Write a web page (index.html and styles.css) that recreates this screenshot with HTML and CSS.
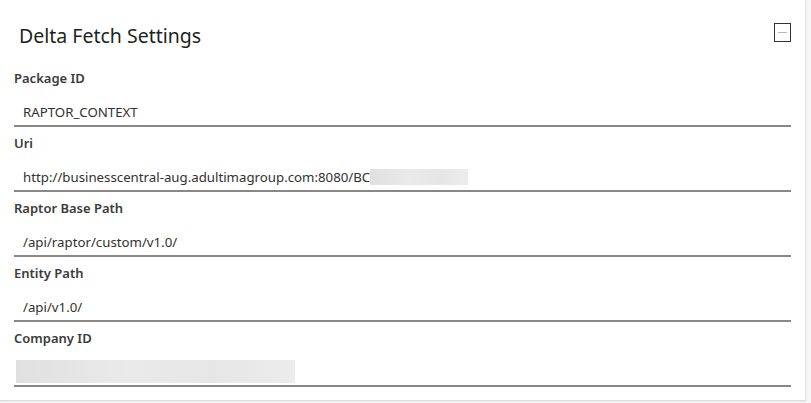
FILE: index.html
```html
<!DOCTYPE html>
<html lang="en">
<head>
<meta charset="utf-8">
<title>Delta Fetch Settings</title>
<link rel="stylesheet" href="styles.css">
</head>
<body>
<section class="card">
  <header class="card-header">
    <h2 class="card-title">Delta Fetch Settings</h2>
    <button class="collapse-btn" type="button" aria-label="Collapse"><span class="dash"></span></button>
  </header>
  <div class="field">
    <div class="field-label">Package ID</div>
    <div class="field-input"><span class="value">RAPTOR_CONTEXT</span></div>
  </div>
  <div class="field">
    <div class="field-label">Uri</div>
    <div class="field-input"><span class="value">http://businesscentral-aug.adultimagroup.com:8080/BC</span><span class="redact redact-uri"></span></div>
  </div>
  <div class="field">
    <div class="field-label">Raptor Base Path</div>
    <div class="field-input"><span class="value">/api/raptor/custom/v1.0/</span></div>
  </div>
  <div class="field">
    <div class="field-label">Entity Path</div>
    <div class="field-input"><span class="value">/api/v1.0/</span></div>
  </div>
  <div class="field">
    <div class="field-label">Company ID</div>
    <div class="field-input field-input-redacted"><span class="redact redact-company"></span></div>
  </div>
</section>
</body>
</html>
```

FILE: styles.css
```css
html, body {
  margin: 0;
  padding: 0;
}
body {
  background: #f7f7f7;
  font-family: "Noto Sans", "Open Sans", sans-serif;
  color: #323130;
  width: 811px;
  height: 403px;
  overflow: hidden;
}
.card {
  width: 806px;
  height: 401px;
  box-sizing: border-box;
  background: #ffffff;
  border-right: 1px solid #e4e4e4;
  border-bottom: 1px solid #dcdcdc;
  box-shadow: 0 1px 2px rgba(0,0,0,0.06);
  padding: 0 14px 0 14px;
}
.card-header {
  height: 62px;
  display: flex;
  align-items: flex-start;
  justify-content: space-between;
  padding-left: 5px;
  box-sizing: border-box;
}
.card-title {
  margin: 24px 0 0 0;
  font-size: 19.5px;
  line-height: 24px;
  font-weight: 400;
  color: #201f1e;
}
.collapse-btn {
  margin: 23px 0 0 0;
  width: 17px;
  height: 19px;
  padding: 0;
  border: 1.5px solid #333;
  background: #fff;
  display: flex;
  align-items: center;
  justify-content: center;
}
.dash {
  display: block;
  width: 9px;
  height: 1px;
  background: #b8b8b8;
}
.field {
  padding-top: 7px;
}
.field-label {
  font-size: 13px;
  line-height: 18px;
  font-weight: 600;
  color: #3b3a39;
}
.field-input {
  display: flex;
  align-items: center;
  padding: 15px 0 3px 9px;
  height: 20px;
  border-bottom: 2px solid #8a8886;
  font-size: 13.25px;
  line-height: 20px;
  color: #323130;
}
.redact {
  display: block;
  background: linear-gradient(90deg, #e0e0e0 0%, #eaeaea 40%, #e6e6e6 70%, #ececec 100%);
}
.redact-uri {
  width: 98px;
  height: 16px;
}
.field-input-redacted {
  padding-left: 2px;
}
.redact-company {
  width: 279px;
  height: 23px;
  margin-top: -2px;
}
```
